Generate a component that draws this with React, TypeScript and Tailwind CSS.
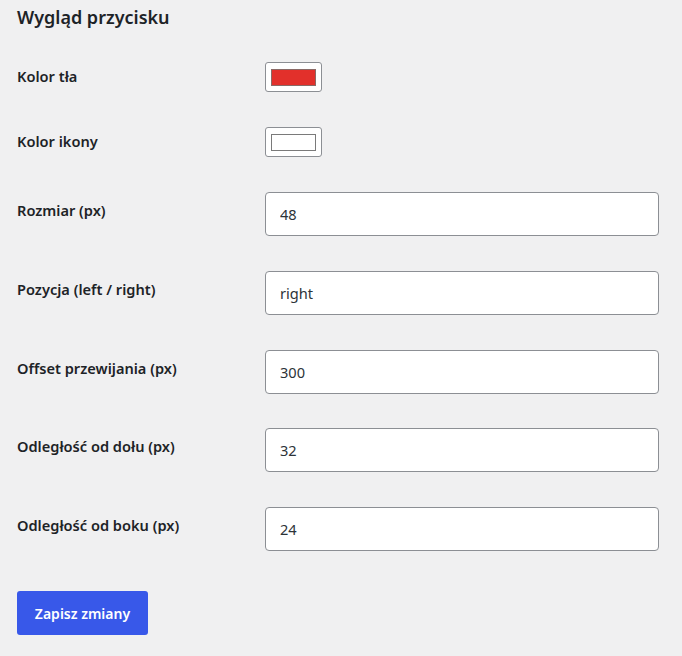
import React, { useState } from "react";

type Field = { id: string; label: string; value: string };

const textFields: Field[] = [
  { id: "size", label: "Rozmiar (px)", value: "48" },
  { id: "position", label: "Pozycja (left / right)", value: "right" },
  { id: "offset", label: "Offset przewijania (px)", value: "300" },
  { id: "bottom", label: "Odległość od dołu (px)", value: "32" },
  { id: "side", label: "Odległość od boku (px)", value: "24" },
];

function ColorSwatch({ color, border }: { color: string; border: string }) {
  return (
    <div className="flex h-[30px] w-[57px] items-center justify-center rounded-[3px] border border-[#8c8f94] bg-white">
      <div className="h-[17px] w-[45px] border" style={{ backgroundColor: color, borderColor: border }} />
    </div>
  );
}

export default function App() {
  const [values, setValues] = useState<Record<string, string>>(
    Object.fromEntries(textFields.map((f) => [f.id, f.value]))
  );

  const handleInputChange = (e: React.ChangeEvent<HTMLInputElement>) => {
    const { id, value } = e.target;
    setValues((v) => ({ ...v, [id]: value }));
  };

  return (
    <div className="min-h-[656px] bg-[#f0f0f1] px-[17px] pt-[4px] font-['Noto_Sans',sans-serif] text-[#1d2327]">
      <h2 className="text-[18px] font-semibold leading-[26px]">Wygląd przycisku</h2>

      <div className="mt-[32px] flex flex-col gap-[35px]">
        {/* Colour pickers */}
        <div className="flex items-center">
          <label className="w-[248px] text-[14.6px] font-semibold">Kolor tła</label>
          <ColorSwatch color="#e2302b" border="#8a6a66" />
        </div>
        <div className="flex items-center">
          <label className="w-[248px] text-[14.6px] font-semibold">Kolor ikony</label>
          <ColorSwatch color="#ffffff" border="#7a7a7a" />
        </div>

        {/* Numeric / text options */}
        <div className="flex flex-col gap-[34.75px]">
          {textFields.map((f) => (
            <div key={f.id} className="flex items-start">
              <label htmlFor={f.id} className="mt-[8px] w-[248px] text-[14.6px] font-semibold leading-5">
                {f.label}
              </label>
              <input
                type="text"
                id={f.id}
                value={values[f.id]}
                onChange={handleInputChange}
                className="h-[44px] w-[394px] rounded-[4px] border border-[#8c8f94] bg-white px-[14px] text-[14.6px] text-[#2c3338] outline-none"
              />
            </div>
          ))}
        </div>
      </div>

      <button className="mt-[40px] h-[44px] w-[131px] rounded-[3px] bg-[#3858e9] text-[14px] font-semibold text-white">
        Zapisz zmiany
      </button>
    </div>
  );
}
